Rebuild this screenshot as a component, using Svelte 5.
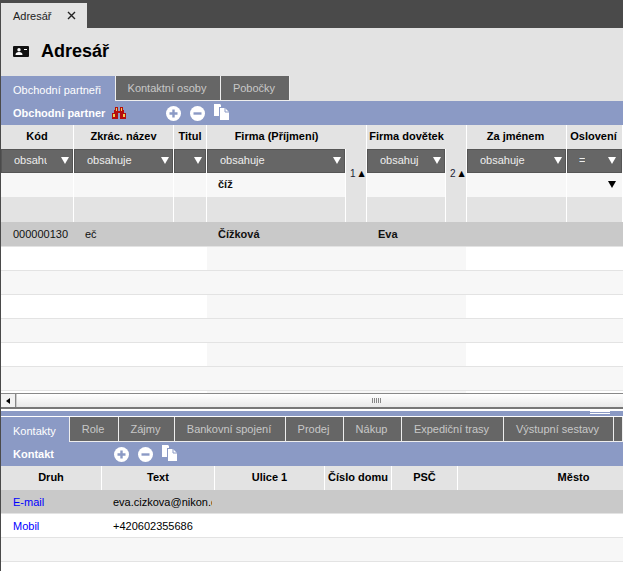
<script>
    const top_tabs = [
        { label: 'Obchodní partneři', width: 115, active: true },
        { label: 'Kontaktní osoby', width: 105 },
        { label: 'Pobočky', width: 69 }
    ]
    const bottom_tabs = [
        { label: 'Kontakty', width: 69, active: true },
        { label: 'Role', width: 49 },
        { label: 'Zájmy', width: 56 },
        { label: 'Bankovní spojení', width: 111 },
        { label: 'Prodej', width: 58 },
        { label: 'Nákup', width: 58 },
        { label: 'Expediční trasy', width: 102 },
        { label: 'Výstupní sestavy', width: 110 },
        { label: '', width: 9 }
    ]
    const columns = [
        { label: 'Kód', filter: 'obsahuje', cls: 'kod' },
        { label: 'Zkrác. název', filter: 'obsahuje', cls: 'zkr' },
        { label: 'Titul', filter: '', cls: 'tit' },
        { label: 'Firma (Příjmení)', filter: 'obsahuje', value: 'číž', cls: 'firma', sort: '1' },
        { label: 'Firma dovětek', filter: 'obsahuj', cls: 'dov', sort: '2' },
        { label: 'Za jménem', filter: 'obsahuje', cls: 'jm' },
        { label: 'Oslovení', filter: '=', cls: 'osl', arrow: true },
        { label: '', filter: '', cls: 'rest' }
    ]
    const contact_columns = [
        { label: 'Druh', width: 101 },
        { label: 'Text', width: 113 },
        { label: 'Ulice 1', width: 110 },
        { label: 'Číslo domu', width: 67 },
        { label: 'PSČ', width: 66 },
        { label: 'Město', width: 232 }
    ]
    const empty_rows = [0, 1, 2, 3, 4, 5, 6]
</script>

{#snippet tools()}
    <svg class="tool" width="15" height="15" viewBox="0 0 15 15">
        <circle cx="7.5" cy="7.5" r="7.5" fill="#fff" />
        <path d="M3.5 7.5h8M7.5 3.5v8" stroke="#8b9ac5" stroke-width="2.4" />
    </svg>
    <svg class="tool" width="15" height="15" viewBox="0 0 15 15">
        <circle cx="7.5" cy="7.5" r="7.5" fill="#fff" />
        <path d="M3.5 7.5h8" stroke="#8b9ac5" stroke-width="2.4" />
    </svg>
    <svg class="tool copy" width="15" height="16" viewBox="0 0 15 16">
        <path d="M0 0h6l1 1v2H5v9H0z" fill="#fff" />
        <path d="M6 4h5l4 4v8H6z" fill="#fff" />
        <path d="M11 4v4h4" fill="none" stroke="#8b9ac5" stroke-width="1" />
    </svg>
{/snippet}

<div class="page">
    <div class="topbar">
        <div class="doc-tab">
            <span>Adresář</span>
            <svg width="9" height="9" viewBox="0 0 9 9">
                <path d="M1 1l7 7M8 1l-7 7" stroke="#222" stroke-width="1.4" />
            </svg>
        </div>
    </div>

    <div class="title">
        <svg width="16" height="11" viewBox="0 0 16 11">
            <rect width="16" height="11" rx="1" fill="#111" />
            <circle cx="6" cy="3.8" r="1.7" fill="#fff" />
            <path d="M2.5 9c0-2.2 1.4-3 3.5-3s3.5.8 3.5 3z" fill="#fff" />
            <path d="M11 3.5h3" stroke="#fff" stroke-width="1" />
        </svg>
        <h1>Adresář</h1>
    </div>

    <div class="tabs">
        {#each top_tabs as tab}
            <div class="tab" class:active={tab.active} style="width: {tab.width}px">{tab.label}</div>
        {/each}
    </div>

    <div class="toolbar">
        <b class="main-label">Obchodní partner</b>
        <svg class="binoculars" width="14" height="12" viewBox="0 0 14 12" shape-rendering="crispEdges">
            <path d="M3 0h3v4h2V0h3v3h1v3h2v6H8V6H6v6H0V6h2V3h1z" fill="#b50d0d" />
            <path d="M4 1h1v3H4zM9 1h1v3H9zM1 7h2v3H1zM11 7h2v3h-2z" fill="#f0d050" />
        </svg>
        {@render tools()}
    </div>

    <div class="grid-head">
        {#each columns as col}
            <div class="cell head {col.cls}" class:nosep={col.sort}>{col.label}</div>
            {#if col.sort}<div class="cell head sort"></div>{/if}
        {/each}
        {#each columns as col}
            {#if col.cls === 'rest'}
                <div class="cell select-cell"><div class="select"></div></div>
            {:else}
                <div class="cell select-cell {col.cls}">
                    <div class="select">
                        <span class="select-text">{col.filter}</span>
                        <i class="arrow"></i>
                    </div>
                </div>
            {/if}
            {#if col.sort}
                <div class="cell sort-mark"><span class="num">{col.sort}</span><span class="up">▲</span></div>
            {/if}
        {/each}
        {#each columns as col}
            <div class="cell input {col.cls}">
                {#if col.value}<b>{col.value}</b>{/if}
                {#if col.arrow}<i class="arrow black"></i>{/if}
            </div>
        {/each}
        {#each columns as col}
            <div class="cell blank {col.cls}"></div>
            {#if col.sort}<div class="cell blank sort"></div>{/if}
        {/each}
    </div>

    <div class="rows">
        <div class="row selected">
            <span class="c-kod">000000130</span>
            <span class="c-zkr">eč</span>
            <b class="c-firma">Čížková</b>
            <b>Eva</b>
        </div>
        {#each empty_rows as i}
            <div class="row" class:odd={i % 2 === 0}><div class="mid"></div></div>
        {/each}
    </div>

    <div class="scrollbar">
        <div class="scroll-btn"><i></i></div>
        <div class="scroll-track"><span class="grip"></span></div>
    </div>

    <div class="splitter">
        <span class="split-mark"></span>
    </div>

    <div class="tabs lower">
        {#each bottom_tabs as tab}
            <div class="tab" class:active={tab.active} style="width: {tab.width}px">{tab.label}</div>
        {/each}
    </div>

    <div class="toolbar">
        <b class="sub-label">Kontakt</b>
        {@render tools()}
    </div>

    <div class="contact-head">
        {#each contact_columns as col}
            <div class="contact-col" style="width: {col.width}px">{col.label}</div>
        {/each}
    </div>
    <div class="contact-row selected">
        <span class="kind">E-mail</span>
        <span class="text">eva.cizkova@nikon.cz</span>
    </div>
    <div class="contact-row">
        <span class="kind">Mobil</span>
        <span class="text">+420602355686</span>
    </div>
    <div class="contact-row grey"></div>
</div>

<style>
    :global(body) {
        margin: 0;
        background: #fff;
    }

    .page {
        width: 623px;
        height: 571px;
        overflow: hidden;
        box-sizing: border-box;
        border-left: 1px solid #4a4a4a;
        font-family: "Liberation Sans", Arial, sans-serif;
        font-size: 11px;
        color: #111;
    }

    .topbar {
        height: 28px;
        margin-left: -1px;
        padding: 3px 0 0 1px;
        box-sizing: border-box;
        background: #4a4a4a;
    }

    .doc-tab {
        width: 86px;
        height: 25px;
        box-sizing: border-box;
        padding-left: 12px;
        display: flex;
        align-items: center;
        gap: 15px;
        background: #e3e3e3;
        color: #222;
    }

    .title {
        height: 48px;
        box-sizing: border-box;
        padding: 0 0 2px 12px;
        display: flex;
        align-items: center;
        gap: 12px;
        background: #e3e3e3;
    }

    .title h1 {
        margin: 0;
        font-size: 18px;
        font-weight: bold;
        color: #000;
    }

    .tabs {
        display: flex;
        height: 25px;
        box-sizing: border-box;
        background: #e3e3e3;
    }

    .tabs.lower {
        background: #8b9ac5;
    }

    .tab {
        box-sizing: border-box;
        height: 25px;
        flex: none;
        display: flex;
        align-items: center;
        justify-content: center;
        padding-right: 2px;
        background: #666;
        color: #c8c8c8;
        border-right: 1px solid #eee;
        border-bottom: 1px solid #eee;
        white-space: nowrap;
    }

    .tab.active {
        background: #8b9ac5;
        color: #fff;
        border-bottom: none;
        justify-content: flex-start;
        padding: 2px 0 0 12px;
    }

    .toolbar {
        height: 24px;
        display: flex;
        align-items: center;
        background: #8b9ac5;
        color: #fff;
    }

    .toolbar b {
        padding-left: 12px;
        box-sizing: border-box;
    }

    .main-label {
        width: 111px;
    }

    .sub-label {
        width: 113px;
    }

    .binoculars {
        margin-right: 40px;
    }

    .tool {
        margin-right: 9px;
    }

    .copy {
        margin-top: -3px;
    }

    .grid-head {
        display: grid;
        grid-template-columns: 73px 100px 33px 139px 21px 79px 21px 100px 56px 1fr;
        grid-template-rows: 24px 24px 24px 25px;
        background: #e3e3e3;
    }

    .cell {
        box-sizing: border-box;
        border-right: 1px solid #fff;
    }

    .head {
        display: flex;
        align-items: center;
        justify-content: center;
        padding-bottom: 2px;
        font-weight: bold;
        color: #000;
        white-space: nowrap;
        overflow: hidden;
    }

    .head.jm,
    .head.osl {
        padding-right: 2px;
    }

    .nosep {
        border-right: none;
    }

    .select-cell {
        background: #e3e3e3;
    }

    .select {
        height: 24px;
        box-sizing: border-box;
        border: 1px solid #555;
        background: #666;
        display: flex;
        align-items: center;
        justify-content: space-between;
        padding: 0 3px 2px 12px;
        color: #eee;
    }

    .osl .select {
        padding: 0 5px 2px 11px;
    }

    .select-text {
        overflow: hidden;
        white-space: nowrap;
    }

    .kod .select-text {
        width: 33px;
        flex: none;
    }

    .arrow {
        flex: none;
        width: 0;
        height: 0;
        margin-left: auto;
        border-left: 4.5px solid transparent;
        border-right: 4.5px solid transparent;
        border-top: 7px solid #fff;
    }

    .arrow.black {
        margin: 8px 0 0 30px;
        display: block;
        border-top-color: #000;
    }

    .sort-mark {
        grid-row: span 2;
        display: flex;
        align-items: center;
        gap: 3px;
        padding-left: 4px;
        background: #e3e3e3;
        font-size: 10px;
    }

    .num {
        color: #223;
    }

    .up {
        font-family: "DejaVu Sans", sans-serif;
        font-size: 8px;
        color: #000;
    }

    .input {
        background: #f7f7f7;
        height: 24px;
        padding-left: 11px;
        line-height: 22px;
    }

    .blank {
        height: 25px;
    }

    .rows {
        height: 171px;
        overflow: hidden;
    }

    .row {
        height: 24px;
        box-sizing: border-box;
        border-bottom: 1px solid #e3e3e3;
        background: #f7f7f7;
    }

    .row.odd {
        background: #fff;
        padding-left: 206px;
    }

    .row .mid {
        display: none;
    }

    .row.odd .mid {
        display: block;
        width: 259px;
        height: 23px;
        background: #f7f7f7;
    }

    .row.selected {
        display: flex;
        align-items: center;
        background: #c9c9c9;
        padding-left: 12px;
        height: 25px;
    }

    .c-kod {
        width: 72px;
    }

    .c-zkr {
        width: 133px;
    }

    .c-firma {
        width: 160px;
    }

    .scrollbar {
        height: 16px;
        display: flex;
        box-sizing: border-box;
        border-top: 1px solid #888;
        border-bottom: 2px solid #777;
        background: #fff;
    }

    .scroll-btn {
        width: 15px;
        flex: none;
        box-sizing: border-box;
        border-right: 1px solid #888;
        background: #f2f2f2;
        display: flex;
        align-items: center;
        justify-content: center;
    }

    .scroll-btn i {
        border-top: 3px solid transparent;
        border-bottom: 3px solid transparent;
        border-right: 4px solid #000;
    }

    .scroll-track {
        flex: 1;
        display: flex;
        align-items: center;
        justify-content: center;
        background: linear-gradient(#fff, #e8e8e8);
        border-left: 1px solid #ccc;
    }

    .grip {
        width: 9px;
        height: 5px;
        margin-left: 113px;
        background: repeating-linear-gradient(90deg, #888 0 1px, transparent 1px 2px);
    }

    .splitter {
        position: relative;
        height: 8px;
        box-sizing: border-box;
        border-top: 2px solid #fff;
        border-bottom: 1px solid #fff;
        background: #8b9ac5;
    }

    .split-mark {
        position: absolute;
        top: 0;
        left: 589px;
        width: 20px;
        height: 3px;
        box-sizing: border-box;
        border-top: 1px solid #fff;
        border-bottom: 1px solid #fff;
    }

    .contact-head {
        display: flex;
        height: 24px;
        background: #e3e3e3;
    }

    .contact-col {
        flex: none;
        box-sizing: border-box;
        border-right: 1px solid #fff;
        display: flex;
        align-items: center;
        justify-content: center;
        padding-bottom: 2px;
        font-weight: bold;
        white-space: nowrap;
        color: #000;
    }

    .contact-row {
        height: 24px;
        box-sizing: border-box;
        border-bottom: 1px solid #e3e3e3;
        display: flex;
        align-items: center;
        padding-left: 12px;
        background: #fff;
    }

    .contact-row.selected {
        background: #c9c9c9;
    }

    .contact-row.grey {
        background: #f7f7f7;
    }

    .kind {
        width: 100px;
        flex: none;
        color: #00f;
    }

    .text {
        width: 99px;
        overflow: hidden;
        white-space: nowrap;
        color: #000;
    }
</style>
